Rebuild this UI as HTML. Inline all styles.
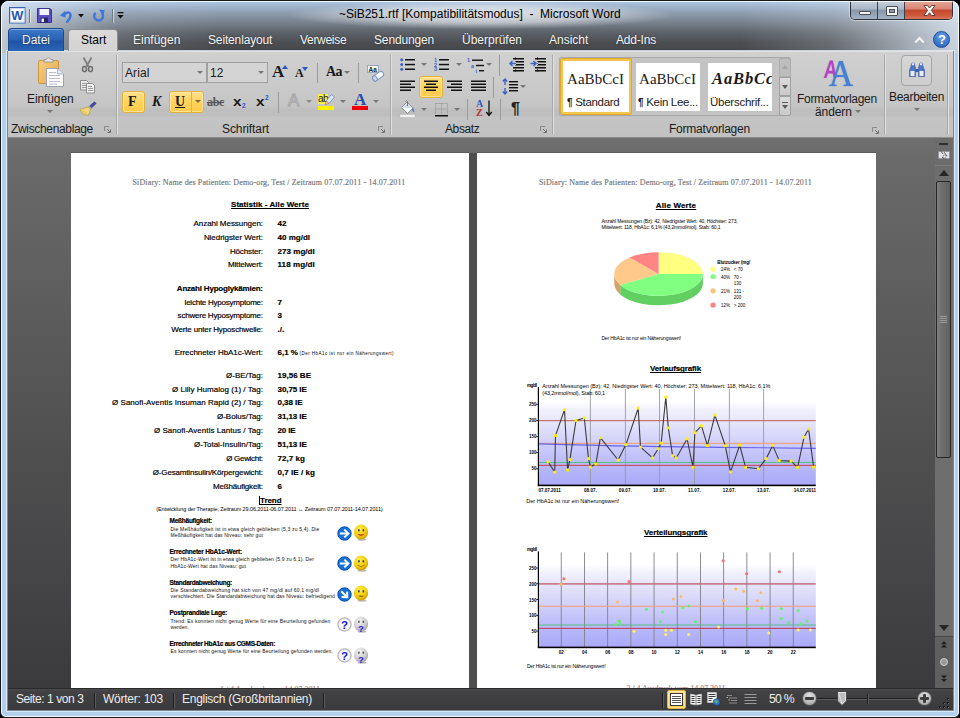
<!DOCTYPE html>
<html><head><meta charset="utf-8">
<style>
*{box-sizing:border-box;margin:0;padding:0}
html,body{width:960px;height:718px;overflow:hidden;background:#000}
body{position:relative;font-family:"Liberation Sans",sans-serif;font-size:12px;color:#000}
.a{position:absolute}
#frame{position:absolute;left:0;top:0;width:960px;height:718px;border-radius:9px 9px 6px 6px;background:#b4cfeb;border:1px solid #15181d;overflow:hidden}
#frame:after{content:'';position:absolute;left:0;top:0;width:958px;height:716px;border-radius:8px 8px 5px 5px;box-shadow:inset 0 0 0 1px rgba(255,255,255,.85);pointer-events:none}
#edge{position:absolute;left:6px;top:50px;width:947px;height:660px;border:1px solid #7b8794;border-top:none;box-shadow:0 0 0 1px rgba(225,238,250,.8)}
#glass{position:absolute;left:0;top:0;width:958px;height:52px;
 background:
 linear-gradient(to right,rgba(225,236,248,.78) 0,rgba(225,236,248,.5) 40px,rgba(225,236,248,.12) 120px,rgba(225,236,248,0) 220px,rgba(225,236,248,0) 740px,rgba(225,236,248,.2) 830px,rgba(225,236,248,.55) 900px,rgba(225,236,248,.85) 958px),
 linear-gradient(to bottom,#adc8e6 0px,#a0b6cf 5px,#8c9aab 13px,#747d88 23px,#5e636a 31px,#4d4f53 41px,#434446 52px);}
#client{position:absolute;left:7px;top:50px;width:944px;height:659px;background:#555}
.t{position:absolute;white-space:nowrap;line-height:14px;height:14px}
.w{color:#fff}
/* tabs */
.tab{position:absolute;top:32px;height:14px;line-height:14px;color:#f4f4f4;white-space:nowrap;text-shadow:0 0 2px rgba(0,0,0,.5)}

#ribbon{position:absolute;left:7px;top:50px;width:945px;height:87px;background:linear-gradient(to bottom,#d0d0d0 0,#cbcbcb 30px,#c5c5c5 54px,#bebebe 58px,#bebebe 64px,#c4c4c4 65px,#c1c1c1 87px);border-top:1px solid #e4e4e4;border-bottom:1px solid #8a8a8a}
#ribbon .t{color:#1a1a1a}
.gsep{position:absolute;top:4px;width:2px;height:80px;background:linear-gradient(to right,#a9a9a9 0,#a9a9a9 1px,#e0e0e0 1px,#e0e0e0 2px)}
.isep{position:absolute;width:1px;background:#9a9a9a}
.dd{position:absolute;width:0;height:0;border-left:3px solid transparent;border-right:3px solid transparent;border-top:3px solid #777}
.dl{position:absolute;width:7px;height:7px}
.ybtn{position:absolute;border:1px solid #e3b23c;border-radius:3px;background:linear-gradient(to bottom,#ffe08a 0,#ffd35e 50%,#ffcb4a 100%);box-shadow:inset 0 0 0 1px rgba(255,240,190,.6)}
.combo{position:absolute;height:21px;border:1px solid #a0a0a0;background:#d4d4d4}

#doc{position:absolute;left:7px;top:137px;width:945px;height:550px;background:linear-gradient(to bottom,#6f6f6f 0,#6a6a6a 20px,#4e4e4f 330px,#3b3a3d 552px);overflow:hidden}
.page{position:absolute;top:15px;height:540px;background:#fff;border-left:1px solid #fff;border-top:1px solid #fff;box-shadow:0 -1px 0 #5e5c58}
#status{position:absolute;left:7px;top:687px;width:945px;height:22px;background:linear-gradient(to bottom,#4a4a4c 0,#414143 3px,#3a3a3c 22px);border-top:1px solid #2a2a2a;color:#ececec}
#status .t{color:#ececec}
.ssep{position:absolute;top:4px;width:2px;height:15px;background:linear-gradient(to right,#1d1d1d 0,#1d1d1d 1px,#5a5a5a 1px,#5a5a5a 2px)}
#sb{position:absolute;left:927px;top:-1px;width:18px;height:552px;background:#6e6e6e}
.p1 .t,.p2 .t{font-family:"Liberation Sans",sans-serif;-webkit-text-stroke:.18px currentColor}
</style></head><body>
<div id="frame">
<div id="glass"></div>
<div id="edge"></div>
<!-- TITLEBAR -->
<div id="titlebar">
<div class="a" style="left:290px;top:0px;width:380px;height:28px;background:radial-gradient(ellipse at center,rgba(255,255,255,.72) 0,rgba(255,255,255,.5) 40%,rgba(255,255,255,.15) 62%,rgba(255,255,255,0) 72%)"></div>
<div class="t" style="left:338px;top:6px;">~SiB251.rtf [Kompatibilitätsmodus]&nbsp; -&nbsp; Microsoft Word</div>
</div>

<!-- QAT (frame coords = page-1) -->
<svg class="a" style="left:8px;top:6px" width="17" height="17" viewBox="0 0 17 17">
 <rect x="0.500" y="0.500" width="15.500" height="15.500" fill="#fdfdfd" stroke="#3a62b4"/>
 <rect x="1.500" y="1.500" width="13.500" height="13.500" fill="none" stroke="#c9d8f0" stroke-width="1"/>
 <text x="8.300" y="13.300" text-anchor="middle" font-family="Liberation Sans" font-weight="bold" font-size="13" fill="#1f55b8" textLength="12" lengthAdjust="spacingAndGlyphs">W</text>
</svg>
<div class="a" style="left:28px;top:8px;width:1px;height:14px;background:#6d7883;box-shadow:1px 0 0 rgba(255,255,255,.55)"></div>
<svg class="a" style="left:36px;top:7px" width="15" height="15" viewBox="0 0 15 15">
 <path d="M0.500 0.500H13L14.500 2V14.500H0.500Z" fill="#5b4fc4" stroke="#3a3290" stroke-width="1"/>
 <rect x="2.500" y="1" width="9.500" height="6" fill="#f3f3fa"/>
 <rect x="3.500" y="9.500" width="7.500" height="5" fill="#2a2660"/>
 <rect x="4.500" y="10.500" width="2.500" height="3.500" fill="#e8e8f4"/>
</svg>
<svg class="a" style="left:58px;top:7px" width="14" height="15" viewBox="0 0 14 15">
 <path d="M4.500 6.300Q11 2.500 11.600 7Q11.500 10.500 8 13.800" fill="none" stroke="#3d78d8" stroke-width="2.400" stroke-linecap="round"/>
 <path d="M0.800 7.800L6.300 2.800L6.800 9.600Z" fill="#3d78d8"/>
</svg>
<svg class="a" style="left:77px;top:13px" width="6" height="4"><path d="M0 0H6L3 3.500Z" fill="#111"/></svg>
<svg class="a" style="left:91px;top:7px" width="14" height="15" viewBox="0 0 14 15">
 <path d="M3.600 4.800A4.400 4.400 0 1 0 10 5.200" fill="none" stroke="#3d78d8" stroke-width="2.500"/>
 <path d="M7 1.600L12.800 2.200L11 8Z" fill="#3d78d8"/>
</svg>
<div class="a" style="left:111px;top:8px;width:1px;height:14px;background:#6d7883;box-shadow:1px 0 0 rgba(255,255,255,.55)"></div>
<svg class="a" style="left:116px;top:11px" width="7" height="7" viewBox="0 0 7 7"><path d="M0.500 0.700H6.500" stroke="#111" stroke-width="1.200"/><path d="M0.300 3H6.700L3.500 6.500Z" fill="#111"/></svg>
<!-- window buttons -->
<div class="a" style="left:849px;top:0px;width:103px;height:19px;border:1px solid #2c3038;border-top:none;border-radius:0 0 5px 5px;box-shadow:0 0 0 1px rgba(255,255,255,.45);overflow:hidden">
 <div class="a" style="left:0;top:0;width:27px;height:18px;background:linear-gradient(#c5d1de 0,#a9b6c5 45%,#8796a8 50%,#a3b3c6 100%);border-right:1px solid #3a4048"></div>
 <div class="a" style="left:27px;top:0;width:27px;height:18px;background:linear-gradient(#c5d1de 0,#a9b6c5 45%,#8796a8 50%,#a3b3c6 100%);border-right:1px solid #3a4048"></div>
 <div class="a" style="left:54px;top:0;width:47px;height:18px;background:linear-gradient(#e6a898 0,#d98572 45%,#c4452c 50%,#cf5a3c 80%,#d8785c 100%)"></div>
</div>
<div class="a" style="left:858px;top:10px;width:12px;height:4px;background:#f2f2f2;border:1px solid #4a4e55;border-radius:1px"></div>
<div class="a" style="left:885px;top:5px;width:12px;height:10px;border:1px solid #4a4e55;border-radius:1px;background:#f2f2f2"></div>
<div class="a" style="left:888px;top:8px;width:6px;height:4px;border:1px solid #4a4e55;background:#8f9dae"></div>
<svg class="a" style="left:921px;top:3px" width="15" height="13" viewBox="0 0 15 13"><path d="M2 1.500H5.500L7.500 4L9.500 1.500H13L9.400 6.300L13 11.500H9.500L7.500 8.700L5.500 11.500H2L5.600 6.300Z" fill="#f6f6f6" stroke="#5a3430" stroke-width=".9"/></svg>
<!-- ribbon minimize + help -->
<svg class="a" style="left:913px;top:35px" width="11" height="8" viewBox="0 0 11 8"><path d="M1.300 6.500L5.500 2L9.700 6.500" fill="none" stroke="#f4f4f4" stroke-width="2"/></svg>
<div class="a" style="left:932px;top:30px;width:17px;height:17px;border-radius:50%;background:radial-gradient(circle at 50% 30%,#6ea2e6 0,#3c78d0 55%,#2a5eb4 100%);border:1px solid #244f9c"></div>
<div class="t" style="left:937px;top:31px;font:bold 13px/15px 'Liberation Sans',sans-serif;height:15px;color:#fff">?</div>
<!-- TABS -->
<div id="tabs">
<div class="a" style="left:7px;top:27px;width:56px;height:24px;border-radius:4px 4px 0 0;background:linear-gradient(to bottom,#3c78c8 0,#2a62b4 45%,#1f54a4 55%,#2b68bb 100%);border:1px solid #1b4a90;border-bottom:none;box-shadow:inset 0 1px 0 rgba(255,255,255,.35)"></div>
<div class="tab" style="left:21px;">Datei</div>
<div class="a" style="left:67px;top:28px;width:50px;height:24px;border-radius:4px 4px 0 0;background:linear-gradient(to bottom,#dcd9d9,#d2d2d2);border:1px solid #8c8c8c;border-bottom:none"></div>
<div class="tab" style="left:80px;color:#000;text-shadow:none">Start</div>
<div class="tab" style="left:132px;">Einfügen</div>
<div class="tab" style="left:207px;letter-spacing:-.15px">Seitenlayout</div>
<div class="tab" style="left:299px;letter-spacing:-.3px">Verweise</div>
<div class="tab" style="left:373px;letter-spacing:-.15px">Sendungen</div>
<div class="tab" style="left:461px;">Überprüfen</div>
<div class="tab" style="left:548px;">Ansicht</div>
<div class="tab" style="left:615px;letter-spacing:-.2px">Add-Ins</div>
</div>

<!-- DOCUMENT AREA : inner coords = page coords - (8,137) -->
<div id="doc">
<div class="a" style="left:461px;top:15px;width:9px;height:540px;background:#4e4e4e"></div>
<div class="page p1" style="left:63px;width:398px"><!--P1-->
<div class="t" style="font:8px 'Liberation Serif';line-height:10px;height:10px;top:23.6px;letter-spacing:0.137px;left:60.5px;color:#7a7a7a">SiDiary: Name des Patienten: Demo-org, Test / Zeitraum 07.07.2011 - 14.07.2011</div>
<div class="t" style="font:bold 8px 'Liberation Sans';line-height:10px;height:10px;top:46.1px;letter-spacing:0.049px;left:159.0px;text-decoration:underline">Statistik - Alle Werte</div>
<div class="t" style="font:8px 'Liberation Sans';line-height:10px;height:10px;top:64.6px;letter-spacing:-0.045px;right:206.0px;">Anzahl Messungen:</div>
<div class="t" style="font:bold 8px 'Liberation Sans';line-height:10px;height:10px;top:64.6px;left:205.5px;">42</div>
<div class="t" style="font:8px 'Liberation Sans';line-height:10px;height:10px;top:78.6px;letter-spacing:-0.051px;right:206.1px;">Niedrigster Wert:</div>
<div class="t" style="font:bold 8px 'Liberation Sans';line-height:10px;height:10px;top:78.6px;letter-spacing:0.006px;left:205.5px;">40 mg/dl</div>
<div class="t" style="font:8px 'Liberation Sans';line-height:10px;height:10px;top:92.6px;letter-spacing:-0.137px;right:206.1px;">Höchster:</div>
<div class="t" style="font:bold 8px 'Liberation Sans';line-height:10px;height:10px;top:92.6px;letter-spacing:0.044px;left:205.5px;">273 mg/dl</div>
<div class="t" style="font:8px 'Liberation Sans';line-height:10px;height:10px;top:106.4px;letter-spacing:-0.132px;right:206.1px;">Mittelwert:</div>
<div class="t" style="font:bold 8px 'Liberation Sans';line-height:10px;height:10px;top:106.4px;letter-spacing:0.092px;left:205.5px;">118 mg/dl</div>
<div class="t" style="font:8px 'Liberation Sans';line-height:10px;height:10px;top:143.5px;letter-spacing:-0.236px;right:206.2px;">leichte Hyposymptome:</div>
<div class="t" style="font:bold 8px 'Liberation Sans';line-height:10px;height:10px;top:143.5px;left:205.5px;">7</div>
<div class="t" style="font:8px 'Liberation Sans';line-height:10px;height:10px;top:156.6px;letter-spacing:-0.220px;right:206.2px;">schwere Hyposymptome:</div>
<div class="t" style="font:bold 8px 'Liberation Sans';line-height:10px;height:10px;top:156.6px;left:205.5px;">3</div>
<div class="t" style="font:8px 'Liberation Sans';line-height:10px;height:10px;top:170.8px;letter-spacing:-0.154px;right:206.2px;">Werte unter Hyposchwelle:</div>
<div class="t" style="font:bold 8px 'Liberation Sans';line-height:10px;height:10px;top:170.8px;left:205.5px;">./.</div>
<div class="t" style="font:8px 'Liberation Sans';line-height:10px;height:10px;top:193.8px;letter-spacing:-0.060px;right:206.1px;">Errechneter HbA1c-Wert:</div>
<div class="t" style="font:bold 8px 'Liberation Sans';line-height:10px;height:10px;top:193.8px;left:205.5px;">6,1 %</div>
<div class="t" style="font:8px 'Liberation Sans';line-height:10px;height:10px;top:216.8px;letter-spacing:0.010px;right:206.0px;">Ø-BE/Tag:</div>
<div class="t" style="font:bold 8px 'Liberation Sans';line-height:10px;height:10px;top:216.8px;letter-spacing:0.018px;left:205.5px;">19,56 BE</div>
<div class="t" style="font:8px 'Liberation Sans';line-height:10px;height:10px;top:230.6px;letter-spacing:0.034px;right:206.0px;">Ø Lilly Humalog (1) / Tag:</div>
<div class="t" style="font:bold 8px 'Liberation Sans';line-height:10px;height:10px;top:230.6px;letter-spacing:-0.064px;left:205.5px;">30,75 IE</div>
<div class="t" style="font:8px 'Liberation Sans';line-height:10px;height:10px;top:244.4px;letter-spacing:0.035px;right:206.0px;">Ø Sanofi-Aventis Insuman Rapid (2) / Tag:</div>
<div class="t" style="font:bold 8px 'Liberation Sans';line-height:10px;height:10px;top:244.4px;letter-spacing:-0.051px;left:205.5px;">0,38 IE</div>
<div class="t" style="font:8px 'Liberation Sans';line-height:10px;height:10px;top:258.1px;letter-spacing:-0.021px;right:206.0px;">Ø-Bolus/Tag:</div>
<div class="t" style="font:bold 8px 'Liberation Sans';line-height:10px;height:10px;top:258.1px;letter-spacing:-0.064px;left:205.5px;">31,13 IE</div>
<div class="t" style="font:8px 'Liberation Sans';line-height:10px;height:10px;top:271.9px;letter-spacing:0.044px;right:206.0px;">Ø Sanofi-Aventis Lantus / Tag:</div>
<div class="t" style="font:bold 8px 'Liberation Sans';line-height:10px;height:10px;top:271.9px;letter-spacing:-0.138px;left:205.5px;">20 IE</div>
<div class="t" style="font:8px 'Liberation Sans';line-height:10px;height:10px;top:285.6px;right:206.0px;">Ø-Total-Insulin/Tag:</div>
<div class="t" style="font:bold 8px 'Liberation Sans';line-height:10px;height:10px;top:285.6px;letter-spacing:-0.064px;left:205.5px;">51,13 IE</div>
<div class="t" style="font:8px 'Liberation Sans';line-height:10px;height:10px;top:299.6px;letter-spacing:-0.318px;right:206.3px;">Ø Gewicht:</div>
<div class="t" style="font:bold 8px 'Liberation Sans';line-height:10px;height:10px;top:299.6px;letter-spacing:0.023px;left:205.5px;">72,7 kg</div>
<div class="t" style="font:8px 'Liberation Sans';line-height:10px;height:10px;top:313.8px;letter-spacing:-0.172px;right:206.2px;">Ø-Gesamtinsulin/Körpergewicht:</div>
<div class="t" style="font:bold 8px 'Liberation Sans';line-height:10px;height:10px;top:313.8px;letter-spacing:0.036px;left:205.5px;">0,7 IE / kg</div>
<div class="t" style="font:8px 'Liberation Sans';line-height:10px;height:10px;top:327.6px;letter-spacing:-0.198px;right:206.2px;">Meßhäufigkeit:</div>
<div class="t" style="font:bold 8px 'Liberation Sans';line-height:10px;height:10px;top:327.6px;left:205.5px;">6</div>
<div class="t" style="font:bold 8px 'Liberation Sans';line-height:10px;height:10px;top:129.6px;letter-spacing:-0.202px;right:206.2px;">Anzahl Hypoglykämien:</div>
<div class="t" style="font:4.5px 'Liberation Sans';line-height:6px;height:6px;top:197.1px;letter-spacing:0.459px;left:227.5px;-webkit-text-stroke:0;">(Der HbA1c ist nur ein Näherungswert)</div>
<div class="t" style="font:bold 8px 'Liberation Sans';line-height:10px;height:10px;top:341.6px;letter-spacing:-0.056px;left:188.0px;text-decoration:underline">Trend</div>
<div class="t" style="font:5.5px 'Liberation Sans';line-height:7px;height:7px;top:351.6px;letter-spacing:-0.105px;left:84.3px;-webkit-text-stroke:0;">(Entwicklung der Therapie, Zeitraum 29.06.2011-06.07.2011 ↔ Zeitraum 07.07.2011-14.07.2011)</div>
<div class="t" style="font:bold 6.5px 'Liberation Sans';line-height:8px;height:8px;top:363.4px;letter-spacing:-0.241px;left:97.5px;">Meßhäufigkeit:</div>
<div class="t" style="font:5px 'Liberation Sans';line-height:6px;height:6px;top:371.7px;letter-spacing:0.166px;left:98.5px;-webkit-text-stroke:0;color:#111">Die Meßhäufigkeit ist in etwa gleich geblieben (5,3 zu 5,4). Die</div>
<div class="t" style="font:5px 'Liberation Sans';line-height:6px;height:6px;top:378.2px;letter-spacing:0.145px;left:98.5px;-webkit-text-stroke:0;color:#111">Meßhäufigkeit hat das Niveau: sehr gut</div>
<div class="t" style="font:bold 6.5px 'Liberation Sans';line-height:8px;height:8px;top:394.0px;letter-spacing:-0.219px;left:97.5px;">Errechneter HbA1c-Wert:</div>
<div class="t" style="font:5px 'Liberation Sans';line-height:6px;height:6px;top:402.3px;letter-spacing:0.135px;left:98.5px;-webkit-text-stroke:0;color:#111">Der HbA1c-Wert ist in etwa gleich geblieben (5,9 zu 6,1). Der</div>
<div class="t" style="font:5px 'Liberation Sans';line-height:6px;height:6px;top:408.8px;letter-spacing:0.130px;left:98.5px;-webkit-text-stroke:0;color:#111">HbA1c-Wert hat das Niveau: gut</div>
<div class="t" style="font:bold 6.5px 'Liberation Sans';line-height:8px;height:8px;top:424.6px;letter-spacing:-0.285px;left:97.5px;">Standardabweichung:</div>
<div class="t" style="font:5px 'Liberation Sans';line-height:6px;height:6px;top:432.9px;letter-spacing:0.185px;left:98.5px;-webkit-text-stroke:0;color:#111">Die Standardabweichung hat sich von 47 mg/dl auf 60,1 mg/dl</div>
<div class="t" style="font:5px 'Liberation Sans';line-height:6px;height:6px;top:439.4px;letter-spacing:0.144px;left:98.5px;-webkit-text-stroke:0;color:#111">verschlechtert. Die Standardabweichung hat das Niveau: befriedigend</div>
<div class="t" style="font:bold 6.5px 'Liberation Sans';line-height:8px;height:8px;top:455.2px;letter-spacing:-0.243px;left:97.5px;">Postprandiale Lage:</div>
<div class="t" style="font:5px 'Liberation Sans';line-height:6px;height:6px;top:463.5px;letter-spacing:0.161px;left:98.5px;-webkit-text-stroke:0;color:#111">Trend: Es konnten nicht genug Werte für eine Beurteilung gefunden</div>
<div class="t" style="font:5px 'Liberation Sans';line-height:6px;height:6px;top:470.0px;letter-spacing:0.100px;left:98.5px;-webkit-text-stroke:0;color:#111">werden.</div>
<div class="t" style="font:bold 6.5px 'Liberation Sans';line-height:8px;height:8px;top:485.6px;letter-spacing:-0.306px;left:97.5px;">Errechneter HbA1c aus CGMS-Daten:</div>
<div class="t" style="font:5px 'Liberation Sans';line-height:6px;height:6px;top:493.9px;letter-spacing:0.143px;left:98.5px;-webkit-text-stroke:0;color:#111">Es konnten nicht genug Werte für eine Beurteilung gefunden werden.</div>
<div class="t" style="font:8px 'Liberation Serif';line-height:10px;height:10px;top:530.6px;letter-spacing:-0.028px;left:148.0px;color:#b08a8a">1 / 4 Ausdruck vom 14.07.2011</div>
<svg class="a" style="left:265.4px;top:371.9px" width="15" height="15" viewBox="0 0 15 15"><circle cx="7.500" cy="7.500" r="6.700" fill="#1670dc" stroke="#0b4aa4" stroke-width="1"/><path d="M2.800 7.500H11M7.300 3.600L11.400 7.500L7.300 11.400" transform="rotate(0 7.500 7.500)" fill="none" stroke="#fff" stroke-width="2"/></svg>
<svg class="a" style="left:281.1px;top:370.2px" width="16" height="18" viewBox="0 0 16 18"><defs><radialGradient id="sm" cx=".4" cy=".3" r=".75"><stop offset="0" stop-color="#fff04a"/><stop offset=".6" stop-color="#f2cc0c"/><stop offset="1" stop-color="#c99600"/></radialGradient></defs><ellipse cx="9" cy="15.600" rx="4.500" ry="1.200" fill="#8a8a8a" opacity=".6"/><ellipse cx="8" cy="8" rx="7.100" ry="7.600" fill="url(#sm)"/><ellipse cx="5.900" cy="6.300" rx=".8" ry="1.400" fill="#3a3a6a"/><ellipse cx="10.300" cy="6.300" rx=".8" ry="1.400" fill="#3a3a6a"/><path d="M4.300 9.600Q8 14.500 11.700 9.600Q8 11.600 4.300 9.600Z" fill="#c8242c"/></svg>
<svg class="a" style="left:265.4px;top:402.1px" width="15" height="15" viewBox="0 0 15 15"><circle cx="7.500" cy="7.500" r="6.700" fill="#1670dc" stroke="#0b4aa4" stroke-width="1"/><path d="M2.800 7.500H11M7.300 3.600L11.400 7.500L7.300 11.400" transform="rotate(0 7.500 7.500)" fill="none" stroke="#fff" stroke-width="2"/></svg>
<svg class="a" style="left:281.1px;top:400.6px" width="16" height="18" viewBox="0 0 16 18"><defs><radialGradient id="sm" cx=".4" cy=".3" r=".75"><stop offset="0" stop-color="#fff04a"/><stop offset=".6" stop-color="#f2cc0c"/><stop offset="1" stop-color="#c99600"/></radialGradient></defs><ellipse cx="9" cy="15.600" rx="4.500" ry="1.200" fill="#8a8a8a" opacity=".6"/><ellipse cx="8" cy="8" rx="7.100" ry="7.600" fill="url(#sm)"/><ellipse cx="5.900" cy="6.300" rx=".8" ry="1.400" fill="#3a3a6a"/><ellipse cx="10.300" cy="6.300" rx=".8" ry="1.400" fill="#3a3a6a"/><path d="M4.500 10.200Q8 13.200 11.500 10.200" fill="none" stroke="#b07a10" stroke-width="1"/></svg>
<svg class="a" style="left:265.4px;top:432.7px" width="15" height="15" viewBox="0 0 15 15"><circle cx="7.500" cy="7.500" r="6.700" fill="#1670dc" stroke="#0b4aa4" stroke-width="1"/><path d="M2.800 7.500H11M7.300 3.600L11.400 7.500L7.300 11.400" transform="rotate(45 7.500 7.500)" fill="none" stroke="#fff" stroke-width="2"/></svg>
<svg class="a" style="left:281.3px;top:431.4px" width="16" height="18" viewBox="0 0 16 18"><defs><radialGradient id="sm" cx=".4" cy=".3" r=".75"><stop offset="0" stop-color="#fff04a"/><stop offset=".6" stop-color="#f2cc0c"/><stop offset="1" stop-color="#c99600"/></radialGradient></defs><ellipse cx="9" cy="15.600" rx="4.500" ry="1.200" fill="#8a8a8a" opacity=".6"/><ellipse cx="8" cy="8" rx="7.100" ry="7.600" fill="url(#sm)"/><ellipse cx="5.900" cy="6.300" rx=".8" ry="1.400" fill="#3a3a6a"/><ellipse cx="10.300" cy="6.300" rx=".8" ry="1.400" fill="#3a3a6a"/><path d="M5.800 11.200H10.200" fill="none" stroke="#9a6a10" stroke-width="1.300"/></svg>
<svg class="a" style="left:265.4px;top:463.1px" width="15" height="15" viewBox="0 0 15 15"><circle cx="7.500" cy="7.500" r="6.600" fill="#ececec" stroke="#b4b4b4" stroke-width="1.200"/><circle cx="7.500" cy="7.500" r="5.200" fill="#f8f8f8"/><text x="7.500" y="11.700" text-anchor="middle" font-family="Liberation Sans" font-weight="bold" font-size="11.500" fill="#1a1ae0">?</text></svg>
<svg class="a" style="left:281.3px;top:461.6px" width="16" height="18" viewBox="0 0 16 18"><defs><radialGradient id="gh" cx=".4" cy=".3" r=".75"><stop offset="0" stop-color="#f4f4f4"/><stop offset=".6" stop-color="#cfcfcf"/><stop offset="1" stop-color="#9c9c9c"/></radialGradient></defs><ellipse cx="9" cy="15.600" rx="4.500" ry="1.200" fill="#8a8a8a" opacity=".6"/><ellipse cx="8" cy="8" rx="7.100" ry="7.600" fill="url(#gh)"/><ellipse cx="5.900" cy="5.800" rx=".8" ry="1.300" fill="#555"/><ellipse cx="10.300" cy="5.800" rx=".8" ry="1.300" fill="#555"/><text x="8" y="15.500" text-anchor="middle" font-family="Liberation Sans" font-weight="bold" font-size="9.500" fill="#1a1ae0">?</text></svg>
<svg class="a" style="left:265.4px;top:494.1px" width="15" height="15" viewBox="0 0 15 15"><circle cx="7.500" cy="7.500" r="6.600" fill="#ececec" stroke="#b4b4b4" stroke-width="1.200"/><circle cx="7.500" cy="7.500" r="5.200" fill="#f8f8f8"/><text x="7.500" y="11.700" text-anchor="middle" font-family="Liberation Sans" font-weight="bold" font-size="11.500" fill="#1a1ae0">?</text></svg>
<svg class="a" style="left:281.3px;top:492.6px" width="16" height="18" viewBox="0 0 16 18"><defs><radialGradient id="gh" cx=".4" cy=".3" r=".75"><stop offset="0" stop-color="#f4f4f4"/><stop offset=".6" stop-color="#cfcfcf"/><stop offset="1" stop-color="#9c9c9c"/></radialGradient></defs><ellipse cx="9" cy="15.600" rx="4.500" ry="1.200" fill="#8a8a8a" opacity=".6"/><ellipse cx="8" cy="8" rx="7.100" ry="7.600" fill="url(#gh)"/><ellipse cx="5.900" cy="5.800" rx=".8" ry="1.300" fill="#555"/><ellipse cx="10.300" cy="5.800" rx=".8" ry="1.300" fill="#555"/><text x="8" y="15.500" text-anchor="middle" font-family="Liberation Sans" font-weight="bold" font-size="9.500" fill="#1a1ae0">?</text></svg>
<div class="a" style="left:187px;top:341.5px;width:1px;height:9px;background:#000"></div>
<!--/P1--></div>
<div class="page p2" style="left:469px;width:399px"><!--P2-->
<svg class="a" style="left:0;top:0" width="397" height="534" viewBox="0 0 397 534">
<path d="M224.9 120.0 A44.3 21.8 0 0 1 142.2 130.9 L142.2 140.4 A44.3 21.8 0 0 0 224.9 129.5 Z" fill="#62cf62"/>
<path d="M142.2 130.9 A44.3 21.8 0 0 1 136.3 120.0 L136.3 129.5 A44.3 21.8 0 0 0 142.2 140.4 Z" fill="#d9a066"/>
<path d="M180.6 120.0 L180.6 98.2 A44.3 21.8 0 0 1 224.9 120.0 Z" fill="#ffff80"/>
<path d="M180.6 120.0 L224.9 120.0 A44.3 21.8 0 0 1 142.2 130.9 Z" fill="#80ff80"/>
<path d="M180.6 120.0 L142.2 130.9 A44.3 21.8 0 0 1 151.5 103.5 Z" fill="#ffc98a"/>
<path d="M180.6 120.0 L151.5 103.5 A44.3 21.8 0 0 1 180.6 98.2 Z" fill="#ff8484"/>
<circle cx="235.0" cy="115.2" r="2.600" fill="#ffff80"/>
<circle cx="235.0" cy="122.5" r="2.600" fill="#80ff80"/>
<circle cx="235.0" cy="136.8" r="2.600" fill="#ffc080"/>
<circle cx="235.0" cy="151.0" r="2.600" fill="#ff8080"/>
<defs>
<linearGradient id="g1" x1="0" y1="0" x2="0" y2="1"><stop offset="0" stop-color="#ffffff"/><stop offset=".13" stop-color="#ffffff"/><stop offset=".22" stop-color="#f0f0fd"/><stop offset=".34" stop-color="#e6e6fa"/><stop offset=".55" stop-color="#d1d1fa"/><stop offset=".8" stop-color="#b8b8fa"/><stop offset="1" stop-color="#a9a9f8"/></linearGradient>
</defs>
<rect x="60.8" y="235.0" width="277.0" height="95.9" fill="url(#g1)"/>
<rect x="111.9" y="235.0" width=".9" height="95.9" fill="#9a9aa2"/>
<rect x="146.9" y="235.0" width=".9" height="95.9" fill="#9a9aa2"/>
<rect x="181.0" y="235.0" width=".9" height="95.9" fill="#9a9aa2"/>
<rect x="216.1" y="235.0" width=".9" height="95.9" fill="#9a9aa2"/>
<rect x="250.9" y="235.0" width=".9" height="95.9" fill="#9a9aa2"/>
<rect x="285.2" y="235.0" width=".9" height="95.9" fill="#9a9aa2"/>
<rect x="60.8" y="266.1" width="277.0" height="1.1" fill="#c86468"/>
<rect x="60.8" y="288.8" width="277.0" height="1.1" fill="#f2a070"/>
<rect x="60.8" y="308.0" width="277.0" height="1.0" fill="#52c482"/>
<rect x="60.8" y="310.8" width="277.0" height="1.1" fill="#d04858"/>
<path d="M60.8 289.8 C122 291.5 172 292.8 242 293.3 L337.8 294.3" fill="none" stroke="#6464f0" stroke-width="1.200"/>
<polyline points="70.2,307.9 76.7,318.1 77.5,281.6 86.5,255.7 89.6,316.0 91.9,305.6 98.0,266.6 106.3,264.0 110.5,304.6 112.4,313.1 117.8,310.0 122.4,283.7 140.1,306.0 147.9,290.6 160.2,254.2 162.5,293.1 174.6,303.9 180.2,294.7 183.2,289.1 187.8,243.0 190.3,273.9 194.6,301.6 198.2,303.9 209.1,284.9 215.0,313.3 216.9,278.7 223.5,271.8 229.4,291.6 236.9,261.1 247.3,291.8 252.5,317.9 261.7,291.2 267.6,313.3 280.3,314.8 288.2,304.6 294.7,291.4 301.2,306.6 313.1,307.1 319.6,313.3 326.0,283.3 330.6,275.1 335.6,313.1" fill="none" stroke="#3c3c40" stroke-width="1.100" stroke-linejoin="round"/>
<rect x="68.8" y="306.5" width="2.800" height="2.800" fill="#fff200"/>
<rect x="75.3" y="316.7" width="2.800" height="2.800" fill="#fff200"/>
<rect x="76.1" y="280.2" width="2.800" height="2.800" fill="#fff200"/>
<rect x="85.1" y="254.3" width="2.800" height="2.800" fill="#fff200"/>
<rect x="88.2" y="314.6" width="2.800" height="2.800" fill="#fff200"/>
<rect x="90.5" y="304.2" width="2.800" height="2.800" fill="#fff200"/>
<rect x="96.6" y="265.2" width="2.800" height="2.800" fill="#fff200"/>
<rect x="104.9" y="262.6" width="2.800" height="2.800" fill="#fff200"/>
<rect x="109.1" y="303.2" width="2.800" height="2.800" fill="#fff200"/>
<rect x="111.0" y="311.7" width="2.800" height="2.800" fill="#fff200"/>
<rect x="116.4" y="308.6" width="2.800" height="2.800" fill="#fff200"/>
<rect x="121.0" y="282.3" width="2.800" height="2.800" fill="#fff200"/>
<rect x="138.7" y="304.6" width="2.800" height="2.800" fill="#fff200"/>
<rect x="146.5" y="289.2" width="2.800" height="2.800" fill="#fff200"/>
<rect x="158.8" y="252.8" width="2.800" height="2.800" fill="#fff200"/>
<rect x="161.1" y="291.7" width="2.800" height="2.800" fill="#fff200"/>
<rect x="173.2" y="302.5" width="2.800" height="2.800" fill="#fff200"/>
<rect x="178.8" y="293.3" width="2.800" height="2.800" fill="#fff200"/>
<rect x="181.8" y="287.7" width="2.800" height="2.800" fill="#fff200"/>
<rect x="186.4" y="241.6" width="2.800" height="2.800" fill="#fff200"/>
<rect x="188.9" y="272.5" width="2.800" height="2.800" fill="#fff200"/>
<rect x="193.2" y="300.2" width="2.800" height="2.800" fill="#fff200"/>
<rect x="196.8" y="302.5" width="2.800" height="2.800" fill="#fff200"/>
<rect x="207.7" y="283.5" width="2.800" height="2.800" fill="#fff200"/>
<rect x="213.6" y="311.9" width="2.800" height="2.800" fill="#fff200"/>
<rect x="215.5" y="277.3" width="2.800" height="2.800" fill="#fff200"/>
<rect x="222.1" y="270.4" width="2.800" height="2.800" fill="#fff200"/>
<rect x="228.0" y="290.2" width="2.800" height="2.800" fill="#fff200"/>
<rect x="235.5" y="259.7" width="2.800" height="2.800" fill="#fff200"/>
<rect x="245.9" y="290.4" width="2.800" height="2.800" fill="#fff200"/>
<rect x="251.1" y="316.5" width="2.800" height="2.800" fill="#fff200"/>
<rect x="260.3" y="289.8" width="2.800" height="2.800" fill="#fff200"/>
<rect x="266.2" y="311.9" width="2.800" height="2.800" fill="#fff200"/>
<rect x="278.9" y="313.4" width="2.800" height="2.800" fill="#fff200"/>
<rect x="286.8" y="303.2" width="2.800" height="2.800" fill="#fff200"/>
<rect x="293.3" y="290.0" width="2.800" height="2.800" fill="#fff200"/>
<rect x="299.8" y="305.2" width="2.800" height="2.800" fill="#fff200"/>
<rect x="311.7" y="305.7" width="2.800" height="2.800" fill="#fff200"/>
<rect x="318.2" y="311.9" width="2.800" height="2.800" fill="#fff200"/>
<rect x="324.6" y="281.9" width="2.800" height="2.800" fill="#fff200"/>
<rect x="329.2" y="273.7" width="2.800" height="2.800" fill="#fff200"/>
<rect x="334.2" y="311.7" width="2.800" height="2.800" fill="#fff200"/>
<rect x="59.8" y="233.0" width="1.200" height="98.9" fill="#000"/>
<rect x="59.8" y="330.6" width="278.0" height="1.600" fill="#000"/>
<rect x="58.3" y="314.4" width="2" height=".8" fill="#000"/>
<rect x="58.3" y="298.2" width="2" height=".8" fill="#000"/>
<rect x="58.3" y="282.1" width="2" height=".8" fill="#000"/>
<rect x="58.3" y="266.0" width="2" height=".8" fill="#000"/>
<rect x="58.3" y="249.9" width="2" height=".8" fill="#000"/>
<rect x="60.8" y="398.4" width="277.0" height="94.5" fill="url(#g1)"/>
<rect x="82.8" y="398.4" width=".9" height="94.5" fill="#80808a"/>
<rect x="106.0" y="398.4" width=".9" height="94.5" fill="#80808a"/>
<rect x="129.2" y="398.4" width=".9" height="94.5" fill="#80808a"/>
<rect x="152.4" y="398.4" width=".9" height="94.5" fill="#80808a"/>
<rect x="175.6" y="398.4" width=".9" height="94.5" fill="#80808a"/>
<rect x="198.8" y="398.4" width=".9" height="94.5" fill="#80808a"/>
<rect x="222.0" y="398.4" width=".9" height="94.5" fill="#80808a"/>
<rect x="245.2" y="398.4" width=".9" height="94.5" fill="#80808a"/>
<rect x="268.4" y="398.4" width=".9" height="94.5" fill="#80808a"/>
<rect x="291.6" y="398.4" width=".9" height="94.5" fill="#80808a"/>
<rect x="314.8" y="398.4" width=".9" height="94.5" fill="#80808a"/>
<rect x="60.8" y="429.2" width="277.0" height="1.4" fill="#c46474"/>
<rect x="60.8" y="451.7" width="277.0" height="1.1" fill="#f2a478"/>
<rect x="60.8" y="470.5" width="277.0" height="1.0" fill="#52c482"/>
<rect x="60.8" y="473.8" width="277.0" height="1.2" fill="#c44a6a"/>
<circle cx="85.9" cy="424.7" r="1.500" fill="#ff6a6a"/>
<circle cx="151.0" cy="427.4" r="1.500" fill="#ff6a6a"/>
<circle cx="245.2" cy="406.7" r="1.500" fill="#ff6a6a"/>
<circle cx="268.6" cy="419.7" r="1.500" fill="#ff6a6a"/>
<circle cx="301.4" cy="417.8" r="1.500" fill="#ff6a6a"/>
<circle cx="82.9" cy="430.3" r="1.500" fill="#ffb866"/>
<circle cx="139.5" cy="448.0" r="1.500" fill="#ffb866"/>
<circle cx="195.3" cy="445.0" r="1.500" fill="#ffb866"/>
<circle cx="203.0" cy="442.4" r="1.500" fill="#ffb866"/>
<circle cx="257.8" cy="435.1" r="1.500" fill="#ffb866"/>
<circle cx="265.5" cy="437.2" r="1.500" fill="#ffb866"/>
<circle cx="282.8" cy="438.7" r="1.500" fill="#ffb866"/>
<circle cx="279.3" cy="446.8" r="1.500" fill="#ffb866"/>
<circle cx="245.2" cy="446.6" r="1.500" fill="#ffb866"/>
<circle cx="168.5" cy="455.2" r="1.500" fill="#66f266"/>
<circle cx="184.6" cy="458.0" r="1.500" fill="#66f266"/>
<circle cx="204.9" cy="453.7" r="1.500" fill="#66f266"/>
<circle cx="210.7" cy="452.0" r="1.500" fill="#66f266"/>
<circle cx="182.5" cy="467.7" r="1.500" fill="#66f266"/>
<circle cx="141.4" cy="467.0" r="1.500" fill="#66f266"/>
<circle cx="142.2" cy="469.6" r="1.500" fill="#66f266"/>
<circle cx="137.6" cy="470.6" r="1.500" fill="#66f266"/>
<circle cx="217.4" cy="467.7" r="1.500" fill="#66f266"/>
<circle cx="269.4" cy="454.7" r="1.500" fill="#66f266"/>
<circle cx="283.6" cy="454.3" r="1.500" fill="#66f266"/>
<circle cx="303.3" cy="454.7" r="1.500" fill="#66f266"/>
<circle cx="320.2" cy="456.4" r="1.500" fill="#66f266"/>
<circle cx="303.3" cy="464.6" r="1.500" fill="#66f266"/>
<circle cx="310.6" cy="468.5" r="1.500" fill="#66f266"/>
<circle cx="323.1" cy="469.8" r="1.500" fill="#66f266"/>
<circle cx="329.0" cy="467.0" r="1.500" fill="#66f266"/>
<circle cx="156.0" cy="477.3" r="1.500" fill="#fff25a"/>
<circle cx="187.8" cy="476.3" r="1.500" fill="#fff25a"/>
<circle cx="193.4" cy="476.3" r="1.500" fill="#fff25a"/>
<circle cx="187.8" cy="480.6" r="1.500" fill="#fff25a"/>
<circle cx="210.7" cy="480.4" r="1.500" fill="#fff25a"/>
<circle cx="240.6" cy="473.1" r="1.500" fill="#fff25a"/>
<circle cx="290.7" cy="479.0" r="1.500" fill="#fff25a"/>
<circle cx="320.2" cy="476.0" r="1.500" fill="#fff25a"/>
<circle cx="332.5" cy="476.0" r="1.500" fill="#fff25a"/>
<rect x="59.8" y="397.4" width="1.200" height="96.5" fill="#000"/>
<rect x="59.8" y="492.6" width="278.0" height="1.600" fill="#000"/>
<rect x="58.3" y="476.7" width="2" height=".8" fill="#000"/>
<rect x="58.3" y="460.9" width="2" height=".8" fill="#000"/>
<rect x="58.3" y="445.2" width="2" height=".8" fill="#000"/>
<rect x="58.3" y="429.4" width="2" height=".8" fill="#000"/>
<rect x="58.3" y="413.6" width="2" height=".8" fill="#000"/>
</svg>
<div class="t" style="font:8px 'Liberation Serif';line-height:10px;height:10px;top:23.5px;letter-spacing:0.137px;left:61.0px;color:#7a7a7a">SiDiary: Name des Patienten: Demo-org, Test / Zeitraum 07.07.2011 - 14.07.2011</div>
<div class="t" style="font:bold 8px 'Liberation Sans';line-height:10px;height:10px;top:46.8px;letter-spacing:0.142px;left:177.8px;text-decoration:underline">Alle Werte</div>
<div class="t" style="font:5px 'Liberation Sans';line-height:6px;height:6px;top:63.9px;letter-spacing:-0.122px;left:123.4px;-webkit-text-stroke:0;">Anzahl Messungen (Bz): 42, Niedrigster Wert: 40, Höchster: 273,</div>
<div class="t" style="font:5px 'Liberation Sans';line-height:6px;height:6px;top:70.3px;letter-spacing:-0.124px;left:123.4px;-webkit-text-stroke:0;">Mittelwert: 118, HbA1c: 6,1% (43,2mmol/mol), Stab: 60,1</div>
<div class="t" style="font:5px 'Liberation Sans';line-height:6px;height:6px;top:181.2px;letter-spacing:-0.128px;left:123.4px;-webkit-text-stroke:0;">Der HbA1c ist nur ein Näherungswert!</div>
<div class="t" style="font:bold 4.5px 'Liberation Sans';line-height:6px;height:6px;top:106.0px;letter-spacing:-0.051px;left:239.2px;-webkit-text-stroke:0;">Blutzucker (mg/</div>
<div class="t" style="font:4.5px 'Liberation Sans';line-height:6px;height:6px;top:113.3px;left:243.0px;-webkit-text-stroke:0;">24%</div>
<div class="t" style="font:4.5px 'Liberation Sans';line-height:6px;height:6px;top:113.3px;left:255.8px;-webkit-text-stroke:0;">< 70</div>
<div class="t" style="font:4.5px 'Liberation Sans';line-height:6px;height:6px;top:120.6px;left:243.0px;-webkit-text-stroke:0;">40%</div>
<div class="t" style="font:4.5px 'Liberation Sans';line-height:6px;height:6px;top:120.6px;left:255.8px;-webkit-text-stroke:0;">70 -</div>
<div class="t" style="font:4.5px 'Liberation Sans';line-height:6px;height:6px;top:126.6px;left:255.8px;-webkit-text-stroke:0;">130</div>
<div class="t" style="font:4.5px 'Liberation Sans';line-height:6px;height:6px;top:134.9px;left:243.0px;-webkit-text-stroke:0;">21%</div>
<div class="t" style="font:4.5px 'Liberation Sans';line-height:6px;height:6px;top:134.9px;left:255.8px;-webkit-text-stroke:0;">131 -</div>
<div class="t" style="font:4.5px 'Liberation Sans';line-height:6px;height:6px;top:141.1px;left:255.8px;-webkit-text-stroke:0;">200</div>
<div class="t" style="font:4.5px 'Liberation Sans';line-height:6px;height:6px;top:149.1px;left:243.0px;-webkit-text-stroke:0;">12%</div>
<div class="t" style="font:4.5px 'Liberation Sans';line-height:6px;height:6px;top:149.1px;left:255.8px;-webkit-text-stroke:0;">> 200</div>
<div class="t" style="font:bold 8px 'Liberation Sans';line-height:10px;height:10px;top:210.3px;letter-spacing:-0.137px;left:172.0px;text-decoration:underline">Verlaufsgrafik</div>
<div class="t" style="font:5.5px 'Liberation Sans';line-height:7px;height:7px;top:228.7px;letter-spacing:-0.023px;left:64.3px;-webkit-text-stroke:0;">Anzahl Messungen (Bz): 42, Niedrigster Wert: 40, Höchster: 273, Mittelwert: 118, HbA1c: 6,1%</div>
<div class="t" style="font:5.5px 'Liberation Sans';line-height:7px;height:7px;top:235.7px;letter-spacing:-0.140px;left:64.3px;-webkit-text-stroke:0;">(43,2mmol/mol), Stab: 60,1</div>
<div class="t" style="font:5.5px 'Liberation Sans';line-height:7px;height:7px;top:343.9px;letter-spacing:0.010px;left:48.3px;-webkit-text-stroke:0;">Der HbA1c ist nur ein Näherungswert!</div>
<div class="t" style="font:bold 8px 'Liberation Sans';line-height:10px;height:10px;top:374.3px;letter-spacing:-0.084px;left:166.0px;text-decoration:underline">Verteilungsgrafik</div>
<div class="t" style="font:5px 'Liberation Sans';line-height:6px;height:6px;top:509.0px;letter-spacing:-0.153px;left:48.9px;-webkit-text-stroke:0;">Der HbA1c ist nur ein Näherungswert!</div>
<div class="t" style="font:8px 'Liberation Serif';line-height:10px;height:10px;top:530.0px;letter-spacing:-0.062px;left:148.5px;color:#b08a8a">2 / 4 Ausdruck vom 14.07.2011</div>
<div class="t" style="font:bold 4.5px 'Liberation Sans';line-height:6px;height:6px;top:228.6px;letter-spacing:-0.500px;left:49.0px;-webkit-text-stroke:0;">mg/dl</div>
<div class="t" style="font:bold 4.5px 'Liberation Sans';line-height:6px;height:6px;top:393.4px;letter-spacing:-0.500px;left:49.0px;-webkit-text-stroke:0;">mg/dl</div>
<div class="t" style="font:bold 4.5px 'Liberation Sans';line-height:6px;height:6px;top:312.0px;left:53.5px;-webkit-text-stroke:0;">50</div>
<div class="t" style="font:bold 4.5px 'Liberation Sans';line-height:6px;height:6px;top:475.1px;left:53.5px;-webkit-text-stroke:0;">50</div>
<div class="t" style="font:bold 4.5px 'Liberation Sans';line-height:6px;height:6px;top:295.8px;left:51.0px;-webkit-text-stroke:0;">100</div>
<div class="t" style="font:bold 4.5px 'Liberation Sans';line-height:6px;height:6px;top:459.3px;left:51.0px;-webkit-text-stroke:0;">100</div>
<div class="t" style="font:bold 4.5px 'Liberation Sans';line-height:6px;height:6px;top:279.7px;left:51.0px;-webkit-text-stroke:0;">150</div>
<div class="t" style="font:bold 4.5px 'Liberation Sans';line-height:6px;height:6px;top:443.6px;left:51.0px;-webkit-text-stroke:0;">150</div>
<div class="t" style="font:bold 4.5px 'Liberation Sans';line-height:6px;height:6px;top:263.6px;left:51.0px;-webkit-text-stroke:0;">200</div>
<div class="t" style="font:bold 4.5px 'Liberation Sans';line-height:6px;height:6px;top:427.8px;left:51.0px;-webkit-text-stroke:0;">200</div>
<div class="t" style="font:bold 4.5px 'Liberation Sans';line-height:6px;height:6px;top:247.5px;left:51.0px;-webkit-text-stroke:0;">250</div>
<div class="t" style="font:bold 4.5px 'Liberation Sans';line-height:6px;height:6px;top:412.0px;left:51.0px;-webkit-text-stroke:0;">250</div>
<div class="t" style="font:bold 4.5px 'Liberation Sans';line-height:6px;height:6px;top:334.0px;letter-spacing:0.081px;left:105.9px;-webkit-text-stroke:0;">08.07.</div>
<div class="t" style="font:bold 4.5px 'Liberation Sans';line-height:6px;height:6px;top:334.0px;letter-spacing:0.081px;left:140.8px;-webkit-text-stroke:0;">09.07.</div>
<div class="t" style="font:bold 4.5px 'Liberation Sans';line-height:6px;height:6px;top:334.0px;letter-spacing:0.081px;left:175.0px;-webkit-text-stroke:0;">10.07.</div>
<div class="t" style="font:bold 4.5px 'Liberation Sans';line-height:6px;height:6px;top:334.0px;letter-spacing:0.122px;left:210.0px;-webkit-text-stroke:0;">11.07.</div>
<div class="t" style="font:bold 4.5px 'Liberation Sans';line-height:6px;height:6px;top:334.0px;letter-spacing:0.081px;left:244.8px;-webkit-text-stroke:0;">12.07.</div>
<div class="t" style="font:bold 4.5px 'Liberation Sans';line-height:6px;height:6px;top:334.0px;letter-spacing:0.081px;left:279.1px;-webkit-text-stroke:0;">13.07.</div>
<div class="t" style="font:bold 4.5px 'Liberation Sans';line-height:6px;height:6px;top:334.0px;left:60.4px;-webkit-text-stroke:0;">07.07.2011</div>
<div class="t" style="font:bold 4.5px 'Liberation Sans';line-height:6px;height:6px;top:334.0px;left:315.7px;-webkit-text-stroke:0;">14.07.2011</div>
<div class="t" style="font:bold 4.5px 'Liberation Sans';line-height:6px;height:6px;top:496.4px;left:80.8px;-webkit-text-stroke:0;">02</div>
<div class="t" style="font:bold 4.5px 'Liberation Sans';line-height:6px;height:6px;top:496.4px;left:104.0px;-webkit-text-stroke:0;">04</div>
<div class="t" style="font:bold 4.5px 'Liberation Sans';line-height:6px;height:6px;top:496.4px;left:127.2px;-webkit-text-stroke:0;">06</div>
<div class="t" style="font:bold 4.5px 'Liberation Sans';line-height:6px;height:6px;top:496.4px;left:150.4px;-webkit-text-stroke:0;">08</div>
<div class="t" style="font:bold 4.5px 'Liberation Sans';line-height:6px;height:6px;top:496.4px;left:173.6px;-webkit-text-stroke:0;">10</div>
<div class="t" style="font:bold 4.5px 'Liberation Sans';line-height:6px;height:6px;top:496.4px;left:196.8px;-webkit-text-stroke:0;">12</div>
<div class="t" style="font:bold 4.5px 'Liberation Sans';line-height:6px;height:6px;top:496.4px;left:220.0px;-webkit-text-stroke:0;">14</div>
<div class="t" style="font:bold 4.5px 'Liberation Sans';line-height:6px;height:6px;top:496.4px;left:243.2px;-webkit-text-stroke:0;">16</div>
<div class="t" style="font:bold 4.5px 'Liberation Sans';line-height:6px;height:6px;top:496.4px;left:266.4px;-webkit-text-stroke:0;">18</div>
<div class="t" style="font:bold 4.5px 'Liberation Sans';line-height:6px;height:6px;top:496.4px;left:289.6px;-webkit-text-stroke:0;">20</div>
<div class="t" style="font:bold 4.5px 'Liberation Sans';line-height:6px;height:6px;top:496.4px;left:312.8px;-webkit-text-stroke:0;">22</div>
<!--/P2--></div>
<div id="sb">
<div class="a" style="left:0;top:0;width:17px;height:36px;background:#6c6c6c"></div>
<div class="a" style="left:4px;top:6px;width:9px;height:2px;background:#2f2f2f"></div>
<svg class="a" style="left:3px;top:12px" width="12" height="12" viewBox="0 0 12 12"><rect x="0.500" y="2.500" width="11" height="7" fill="#e6e2ee" stroke="#8a8a9a" stroke-width=".6"/><path d="M2 1L5 5M4 8L7 11M6 3L9 7" stroke="#666" stroke-width="1"/><circle cx="6.500" cy="7.500" r="1.500" fill="#fff" stroke="#555" stroke-width=".6"/></svg>
<div class="a" style="left:0;top:28px;width:17px;height:1px;background:#7d7d7d"></div>
<svg class="a" style="left:4px;top:33px" width="10" height="6"><path d="M0 6L5 0L10 6Z" fill="#262626"/></svg>
<div class="a" style="left:1px;top:44px;width:15px;height:277px;border:1px solid #262626;border-radius:2px;background:linear-gradient(to right,#7f7f7f 0,#6f6f6f 35%,#616161 100%)"></div>
<div class="a" style="left:5px;top:179px;width:7px;height:1px;background:#9a9a9a;box-shadow:0 2px 0 #9a9a9a,0 4px 0 #9a9a9a,0 6px 0 #9a9a9a"></div>
<svg class="a" style="left:4px;top:488px" width="10" height="6"><path d="M0 0L10 0L5 6Z" fill="#262626"/></svg>
<div class="a" style="left:0;top:499px;width:18px;height:53px;background:#5f5f5f;border-top:1px solid #4a4a4a"></div>
<svg class="a" style="left:6px;top:504px" width="6" height="7" viewBox="0 0 8 9"><path d="M0 4L4 0L8 4ZM0 8.500L4 4.500L8 8.500Z" fill="#1e1e1e"/></svg>
<div class="a" style="left:5px;top:521px;width:8px;height:8px;border-radius:50%;background:#9a9a9a;border:1px solid #cfcfcf"></div>
<svg class="a" style="left:6px;top:538px" width="6" height="7" viewBox="0 0 8 9"><path d="M0 0.500L8 0.500L4 4.500ZM0 5L8 5L4 9Z" fill="#1e1e1e"/></svg>
</div>
</div>
<!-- STATUS BAR : inner coords = page coords - (8,690) -->
<div id="status">
<div class="t" style="left:8px;top:3px;letter-spacing:-.42px">Seite: 1 von 3</div>
<div class="ssep" style="left:86px"></div>
<div class="t" style="left:95px;top:3px;letter-spacing:-.25px">Wörter: 103</div>
<div class="ssep" style="left:165px"></div>
<div class="t" style="left:174px;top:3px;letter-spacing:-.27px">Englisch (Großbritannien)</div>
<div class="ssep" style="left:315px"></div>
<div class="ssep" style="left:654px"></div>
<!-- view buttons -->
<div class="ybtn" style="left:659px;top:1px;width:19px;height:19px;border-radius:2px"></div>
<svg class="a" style="left:662px;top:4px" width="13" height="13" viewBox="0 0 13 13"><rect x="0.500" y="0.500" width="12" height="12" fill="#fff" stroke="#3a3a3a"/><path d="M2 3.500h9M2 5.500h9M2 7.500h9M2 9.500h9" stroke="#555" stroke-width="1"/></svg>
<svg class="a" style="left:682px;top:4px" width="12" height="13" viewBox="0 0 12 13"><path d="M0.500 1L5.500 2V12L0.500 11ZM11.500 1L6.500 2V12L11.500 11Z" fill="#f2f2f2" stroke="#cfcfcf" stroke-width=".5"/><path d="M1.500 3.500h3M1.500 5.500h3M1.500 7.500h3M1.500 9.500h3M7.500 3.500h3M7.500 5.500h3M7.500 7.500h3M7.500 9.500h3" stroke="#3a3a3a" stroke-width="1"/></svg>
<svg class="a" style="left:699px;top:3px" width="14" height="14" viewBox="0 0 14 14"><rect x="0.500" y="0.500" width="9" height="10" fill="#f4f4f4" stroke="#cfcfcf" stroke-width=".5"/><path d="M1.500 2.500h7M1.500 4.500h7M1.500 6.500h4M1.500 8.500h3" stroke="#3a3a3a" stroke-width="1"/><circle cx="9.500" cy="10" r="3.300" fill="#2f74cc" stroke="#1a4a8c" stroke-width=".5"/><path d="M7.500 9Q9 7.500 10.500 8.500Q11.500 10 10 11.500Q8 11 7.500 9Z" fill="#5cb85c"/></svg>
<svg class="a" style="left:718px;top:4px" width="12" height="12" viewBox="0 0 12 12"><path d="M1 2.500h5M3 5h8M5 7.500h6M3 10h8" stroke="#8d8d8d" stroke-width="1"/><path d="M0.500 4.500h1.500M2.500 7h1.500" stroke="#b0b0b0" stroke-width="1"/></svg>
<svg class="a" style="left:736px;top:4px" width="13" height="12" viewBox="0 0 13 12"><path d="M0.500 1.500h12M0.500 4.500h12M0.500 7.500h12M0.500 10.500h12" stroke="#9a9a9a" stroke-width="1.100"/></svg>
<div class="t" style="left:761px;top:3px;letter-spacing:-.8px;font-size:12.300px">50 %</div>
<!-- zoom slider -->
<div class="a" style="left:809px;top:9px;width:102px;height:1px;background:#1f1f1f;box-shadow:0 1px 0 #5c5c5c"></div>
<div class="a" style="left:859px;top:5px;width:1px;height:10px;background:#1f1f1f;box-shadow:1px 0 0 #5c5c5c"></div>
<div class="a" style="left:794px;top:2px;width:15px;height:15px;border-radius:50%;background:radial-gradient(circle at 50% 30%,#e4e4e4 0,#b9b9b9 60%,#8f8f8f 100%);border:1px solid #555"></div>
<div class="a" style="left:797px;top:8px;width:9px;height:3px;background:#3c3c3c;border-radius:1px"></div>
<div class="a" style="left:909px;top:2px;width:15px;height:15px;border-radius:50%;background:radial-gradient(circle at 50% 30%,#e4e4e4 0,#b9b9b9 60%,#8f8f8f 100%);border:1px solid #555"></div>
<div class="a" style="left:912px;top:8px;width:9px;height:3px;background:#3c3c3c;border-radius:1px"></div>
<div class="a" style="left:915px;top:5px;width:3px;height:9px;background:#3c3c3c;border-radius:1px"></div>
<svg class="a" style="left:829px;top:2px" width="10" height="15" viewBox="0 0 10 15"><path d="M0.500 0.500H9.500V10L5 14.500L0.500 10Z" fill="#bdbdbd" stroke="#4a4a4a"/><path d="M1.500 1.500H8.500V9.500L5 13Z" fill="none" stroke="#e9e9e9" stroke-width=".8"/></svg>
<!-- grip -->
<svg class="a" style="left:931px;top:9px" width="11" height="11" viewBox="0 0 11 11"><g fill="#1c1c1c"><rect x="8" y="0" width="2" height="2"/><rect x="4" y="4" width="2" height="2"/><rect x="8" y="4" width="2" height="2"/><rect x="0" y="8" width="2" height="2"/><rect x="4" y="8" width="2" height="2"/><rect x="8" y="8" width="2" height="2"/></g><g fill="#6a6a6a"><rect x="9" y="1" width="1" height="1"/><rect x="5" y="5" width="1" height="1"/><rect x="9" y="5" width="1" height="1"/><rect x="1" y="9" width="1" height="1"/><rect x="5" y="9" width="1" height="1"/><rect x="9" y="9" width="1" height="1"/></g></svg>
</div>


<!-- RIBBON -->
<div id="ribbon">
<!-- coordinates inside ribbon are page coords minus (8,51) : use inner wrapper -->
<div class="a" id="rb" style="left:-8px;top:-52px;width:960px;height:140px">

<!-- Zwischenablage -->
<svg class="a" style="left:37px;top:56px" width="28" height="32" viewBox="0 0 28 32">
 <defs><linearGradient id="cb" x1="0" y1="0" x2="1" y2="1"><stop offset="0" stop-color="#f7cd80"/><stop offset="1" stop-color="#e9a94c"/></linearGradient></defs>
 <rect x="1.5" y="4.5" width="20" height="23" rx="1.5" fill="url(#cb)" stroke="#c99744"/>
 <path d="M7 6 L7 3.5 L9.5 3.5 Q11.5 0 13.5 3.5 L16 3.5 L16 6 Z" fill="#e8e8e8" stroke="#8a8a8a" stroke-width=".8"/>
 <path d="M9.5 12.500 L20.5 12.500 L26.5 18 L26.5 30.500 L9.500 30.500 Z" fill="#fdfdff" stroke="#9aa3b3"/>
 <path d="M20.500 12.500 L20.500 18 L26.500 18" fill="#e4e8f0" stroke="#9aa3b3" stroke-width=".8"/>
 <g stroke="#b9bfd0" stroke-width="1"><path d="M12 16.5h7M12 19.500h11M12 22.500h11M12 25.500h11M12 28h8"/></g>
</svg>
<div class="t" style="left:27px;top:92px;letter-spacing:-.1px">Einfügen</div>
<div class="dd" style="left:47px;top:110px"></div>
<!-- scissors -->
<svg class="a" style="left:81px;top:57px" width="13" height="16" viewBox="0 0 13 16">
 <path d="M2.500 0.500 L7.500 9.500 M10.500 0.500 L5.500 9.500" stroke="#7d7d7d" stroke-width="1.700" fill="none"/>
 <ellipse cx="3.500" cy="12" rx="2" ry="2.600" fill="none" stroke="#6e6e6e" stroke-width="1.500"/>
 <ellipse cx="9.500" cy="12" rx="2" ry="2.600" fill="none" stroke="#6e6e6e" stroke-width="1.500"/>
</svg>
<!-- copy -->
<svg class="a" style="left:79px;top:80px" width="17" height="14" viewBox="0 0 17 14">
 <path d="M1.500 0.500h6l2 2v7.500h-8z" fill="#e9e9e9" stroke="#8c8c8c"/>
 <path d="M3 3.500h4M3 5.500h5M3 7.500h5" stroke="#9a9a9a"/>
 <path d="M7.500 3.500h6l2 2v7.500h-8z" fill="#efefef" stroke="#8c8c8c"/>
 <path d="M9 6.500h4M9 8.500h5M9 10.500h5" stroke="#9a9a9a"/>
</svg>
<!-- format painter -->
<svg class="a" style="left:79px;top:101px" width="18" height="16" viewBox="0 0 18 16">
 <path d="M15.500 0.800 L17.200 2.500 L12.500 7 L10.500 5 Z" fill="#4b4aa8" stroke="#35347a" stroke-width=".6"/>
 <path d="M10.500 5 L12.500 7 L11 8.500 L9 6.500 Z" fill="#b8b8c8" stroke="#777" stroke-width=".5"/>
 <path d="M9 6 L11.500 8.500 L9.500 14 Q7 15 4.500 13 Q2 11.500 1 8.500 Z" fill="#f3d878" stroke="#b89a3c" stroke-width=".7"/>
 <path d="M3 9.500 L8.500 13.500" stroke="#d1b24f" stroke-width=".8"/>
</svg>
<div class="t" style="left:11px;top:122px;letter-spacing:-.34px">Zwischenablage</div>
<svg class="dl" style="left:104px;top:126px" viewBox="0 0 7 7"><path d="M0.500 5V0.500H5" fill="none" stroke="#8a8a8a"/><path d="M3 3L6 6M6.500 3.500V6.500H3.500" fill="none" stroke="#6f6f6f"/></svg>
<div class="gsep" style="left:116px;top:55px"></div>


<!-- Schriftart -->
<div class="combo" style="left:122px;top:62px;width:85px"></div>
<div class="t" style="left:125px;top:66px;letter-spacing:.1px">Arial</div>
<div class="dd" style="left:197px;top:71px"></div>
<div class="combo" style="left:207px;top:62px;width:61px"></div>
<div class="t" style="left:210px;top:66px">12</div>
<div class="dd" style="left:258px;top:71px"></div>
<!-- grow / shrink -->
<div class="t" style="left:272px;top:62px;font:bold 17px/20px 'Liberation Serif',serif;height:20px">A</div>
<svg class="a" style="left:282px;top:65px" width="6" height="4"><path d="M0 4L3 0L6 4Z" fill="#2a55c8"/></svg>
<div class="t" style="left:295px;top:65px;font:bold 12px/16px 'Liberation Serif',serif;height:16px">A</div>
<svg class="a" style="left:302px;top:67px" width="6" height="4"><path d="M0 0L6 0L3 4Z" fill="#2a55c8"/></svg>
<div class="isep" style="left:317px;top:63px;height:20px"></div>
<div class="t" style="left:326px;top:63px;font:bold 14px/18px 'Liberation Serif',serif;height:18px;letter-spacing:-.5px">Aa</div>
<div class="dd" style="left:344px;top:71px"></div>
<div class="isep" style="left:358px;top:63px;height:20px"></div>
<!-- clear formatting -->
<svg class="a" style="left:366px;top:64px" width="19" height="18" viewBox="0 0 19 18">
 <rect x="1.500" y="1.500" width="11" height="7" fill="#fff" stroke="#9aa8c0"/>
 <text x="2.500" y="8" font-family="Liberation Sans" font-size="6.500" font-weight="bold" fill="#222">Aa</text>
 <g transform="rotate(-35 12 12)"><rect x="6" y="9.500" width="12" height="5.500" rx="2.500" fill="#f4f7fc" stroke="#7f94b8"/><rect x="6" y="9.500" width="4" height="5.500" rx="2" fill="#c9d6ec" stroke="#7f94b8"/></g>
</svg>
<!-- row 2 -->
<div class="ybtn" style="left:122px;top:91px;width:23px;height:22px"></div>
<div class="t" style="left:128px;top:94px;font:bold 14px/16px 'Liberation Serif',serif;height:16px">F</div>
<div class="t" style="left:152px;top:94px;font:italic bold 14px/16px 'Liberation Serif',serif;height:16px">K</div>
<div class="ybtn" style="left:169px;top:91px;width:35px;height:22px"></div>
<div class="a" style="left:191px;top:92px;width:1px;height:20px;background:#e3b23c"></div>
<div class="t" style="left:175px;top:94px;font:bold 14px/16px 'Liberation Serif',serif;height:16px;text-decoration:underline">U</div>
<div class="dd" style="left:195px;top:100px;border-top-color:#7a6a3a"></div>
<div class="t" style="left:207px;top:95px;font:bold 12px/15px 'Liberation Serif',serif;height:15px;text-decoration:line-through;color:#555;letter-spacing:-.3px">abc</div>
<div class="t" style="left:233px;top:94px;font:bold 13px/16px 'Liberation Sans',sans-serif;height:16px;color:#1c1c1c;transform:scaleX(1.18);transform-origin:0 0">x</div>
<div class="t" style="left:242px;top:102px;font:bold 6.500px/7px 'Liberation Sans',sans-serif;height:7px;color:#2a55c8">2</div>
<div class="t" style="left:256px;top:94px;font:bold 13px/16px 'Liberation Sans',sans-serif;height:16px;color:#1c1c1c;transform:scaleX(1.18);transform-origin:0 0">x</div>
<div class="t" style="left:265px;top:94px;font:bold 6.500px/7px 'Liberation Sans',sans-serif;height:7px;color:#2a55c8">2</div>
<div class="isep" style="left:278px;top:92px;height:21px"></div>
<!-- text effects -->
<div class="t" style="left:288px;top:91px;font:17px/20px 'Liberation Sans',sans-serif;height:20px;color:#d2d2d2;-webkit-text-stroke:1px #a6a6a6;text-shadow:0 0 2px #bbb">A</div>
<div class="dd" style="left:306px;top:100px;border-top-color:#8a8a8a"></div>
<!-- highlight -->
<div class="a" style="left:318px;top:94px;width:10px;height:10px;background:#fff04a"></div>
<div class="t" style="left:318px;top:93px;font:10px/11px 'Liberation Sans',sans-serif;height:11px;letter-spacing:-.6px">ab</div>
<svg class="a" style="left:324px;top:94px" width="11" height="12" viewBox="0 0 11 12"><path d="M7.500 0.500L10.500 3L5 9.500L2 7Z" fill="#dfe8f5" stroke="#6f86ad" stroke-width=".8"/><path d="M2 7L5 9.500L1 11Z" fill="#e8c890" stroke="#9a7a40" stroke-width=".5"/></svg>
<div class="a" style="left:318px;top:106px;width:16px;height:4px;background:#fff000"></div>
<div class="dd" style="left:340px;top:100px"></div>
<!-- font colour -->
<div class="t" style="left:354px;top:90px;font:bold 17px/20px 'Liberation Serif',serif;height:20px;color:#2b4fa8">A</div>
<div class="a" style="left:352px;top:106px;width:16px;height:4px;background:#f00000"></div>
<div class="dd" style="left:373px;top:100px"></div>
<div class="t" style="left:222px;top:122px;letter-spacing:-.1px">Schriftart</div>
<svg class="dl" style="left:378px;top:126px" viewBox="0 0 7 7"><path d="M0.500 5V0.500H5" fill="none" stroke="#8a8a8a"/><path d="M3 3L6 6M6.500 3.500V6.500H3.500" fill="none" stroke="#6f6f6f"/></svg>
<div class="gsep" style="left:390px;top:55px"></div>


<!-- Absatz -->
<!-- bullets -->
<svg class="a" style="left:400px;top:58px" width="16" height="13" viewBox="0 0 16 13">
 <g fill="#3b62c4"><circle cx="1.700" cy="1.800" r="1.500"/><circle cx="1.700" cy="6.500" r="1.500"/><circle cx="1.700" cy="11.200" r="1.500"/></g>
 <g fill="#111"><rect x="5" y="1" width="10" height="1.500"/><rect x="5" y="5.800" width="10" height="1.500"/><rect x="5" y="10.500" width="10" height="1.500"/></g>
</svg>
<div class="dd" style="left:421px;top:63px"></div>
<!-- numbering -->
<svg class="a" style="left:434px;top:57px" width="16" height="15" viewBox="0 0 16 15">
 <g font-family="Liberation Sans" font-size="5.500" font-weight="bold" fill="#3b62c4"><text x="0" y="4.800">1</text><text x="0" y="9.600">2</text><text x="0" y="14.400">3</text></g>
 <g fill="#111"><rect x="5" y="2" width="10" height="1.500"/><rect x="5" y="6.800" width="10" height="1.500"/><rect x="5" y="11.500" width="10" height="1.500"/></g>
</svg>
<div class="dd" style="left:456px;top:63px"></div>
<!-- multilevel -->
<svg class="a" style="left:467px;top:57px" width="19" height="17" viewBox="0 0 19 17">
 <g font-family="Liberation Sans" font-size="5.500" font-weight="bold" fill="#3b62c4"><text x="0" y="5">1</text><text x="4" y="10.500">a</text><text x="8.500" y="16">i</text></g>
 <g fill="#111"><rect x="5" y="2.500" width="11" height="1.400"/><rect x="9" y="7.800" width="8" height="1.400"/><rect x="12" y="13" width="5" height="1.400"/></g>
</svg>
<div class="dd" style="left:486px;top:63px"></div>
<div class="isep" style="left:499px;top:55px;height:21px"></div>
<!-- decrease indent -->
<svg class="a" style="left:508px;top:57px" width="17" height="15" viewBox="0 0 17 15">
 <g fill="#111"><rect x="5" y="1" width="11" height="1.500"/><rect x="8" y="4" width="8" height="1.500"/><rect x="8" y="7" width="8" height="1.500"/><rect x="5" y="10" width="11" height="1.500"/><rect x="5" y="13" width="11" height="1.500"/></g>
 <path d="M7 6.500H2.500M4.500 4L2 6.500L4.500 9" fill="none" stroke="#3b62c4" stroke-width="1.500"/>
 <path d="M7.500 0V15" stroke="#111" stroke-width=".6" stroke-dasharray="1 1"/>
</svg>
<!-- increase indent -->
<svg class="a" style="left:530px;top:57px" width="17" height="15" viewBox="0 0 17 15">
 <g fill="#111"><rect x="5" y="1" width="11" height="1.500"/><rect x="8" y="4" width="8" height="1.500"/><rect x="8" y="7" width="8" height="1.500"/><rect x="5" y="10" width="11" height="1.500"/><rect x="5" y="13" width="11" height="1.500"/></g>
 <path d="M0.500 6.500H5.500M3.500 4L6 6.500L3.500 9" fill="none" stroke="#3b62c4" stroke-width="1.500"/>
 <path d="M7.500 0V15" stroke="#111" stroke-width=".6" stroke-dasharray="1 1"/>
</svg>
<!-- row 2 : alignment -->
<svg class="a" style="left:400px;top:80px" width="16" height="13" viewBox="0 0 16 13"><g fill="#111"><rect x="0" y="0.500" width="15" height="1.500"/><rect x="0" y="3.500" width="11" height="1.500"/><rect x="0" y="6.500" width="15" height="1.500"/><rect x="0" y="9.500" width="11" height="1.500"/></g></svg>
<div class="ybtn" style="left:419px;top:76px;width:24px;height:22px"></div>
<svg class="a" style="left:424px;top:80px" width="15" height="13" viewBox="0 0 15 13"><g fill="#111"><rect x="0" y="0.500" width="14" height="1.500"/><rect x="2" y="3.500" width="10" height="1.500"/><rect x="0" y="6.500" width="14" height="1.500"/><rect x="2" y="9.500" width="10" height="1.500"/></g></svg>
<svg class="a" style="left:447px;top:80px" width="16" height="13" viewBox="0 0 16 13"><g fill="#111"><rect x="0" y="0.500" width="15" height="1.500"/><rect x="4" y="3.500" width="11" height="1.500"/><rect x="0" y="6.500" width="15" height="1.500"/><rect x="4" y="9.500" width="11" height="1.500"/></g></svg>
<svg class="a" style="left:471px;top:80px" width="16" height="13" viewBox="0 0 16 13"><g fill="#111"><rect x="0" y="0.500" width="15" height="1.500"/><rect x="0" y="3.500" width="15" height="1.500"/><rect x="0" y="6.500" width="15" height="1.500"/><rect x="0" y="9.500" width="15" height="1.500"/></g></svg>
<div class="isep" style="left:493px;top:77px;height:21px"></div>
<!-- line spacing -->
<svg class="a" style="left:502px;top:78px" width="17" height="17" viewBox="0 0 17 17">
 <path d="M3 1L3 7M0.800 3.500L3 1L5.200 3.500M3 10L3 16M0.800 13.500L3 16L5.200 13.500" fill="none" stroke="#3b62c4" stroke-width="1.400"/>
 <g fill="#111"><rect x="7" y="3" width="9" height="1.400"/><rect x="7" y="6" width="9" height="1.400"/><rect x="7" y="9" width="9" height="1.400"/><rect x="7" y="12" width="9" height="1.400"/></g>
</svg>
<div class="dd" style="left:520px;top:85px"></div>
<!-- row 3 -->
<svg class="a" style="left:399px;top:100px" width="18" height="18" viewBox="0 0 18 18">
 <path d="M2.500 7.500L8 2L14 8L8.500 13.500Z" fill="#f6f8fb" stroke="#7d8590" stroke-width=".9"/>
 <path d="M4 7.500L8 3.500L12.500 8Z" fill="#c9d4e4"/>
 <path d="M6.500 1.500Q7.500 -0.500 8.500 1.500L8.500 6" fill="none" stroke="#6b6b6b" stroke-width=".9"/>
 <path d="M14 8Q16 10 15 12.500Q13 11.500 13 9Z" fill="#3f78d0"/>
 <rect x="1" y="14.500" width="15" height="3" fill="#f2f2f2" stroke="#b5b5b5" stroke-width=".5"/>
</svg>
<div class="dd" style="left:421px;top:108px"></div>
<svg class="a" style="left:434px;top:102px" width="15" height="15" viewBox="0 0 15 15">
 <path d="M1.500 1.500H13.500V12M1.500 1.500V12M7.500 1.500V12M1.500 7H13.500" fill="none" stroke="#8f8f8f" stroke-width="1" stroke-dasharray="1 1"/>
 <rect x="1" y="13" width="13" height="1.500" fill="#111"/>
</svg>
<div class="dd" style="left:454px;top:108px"></div>
<div class="isep" style="left:467px;top:99px;height:21px"></div>
<div class="t" style="left:476px;top:99px;font:bold 10px/10px 'Liberation Serif',serif;height:10px;color:#2f58b8">A</div>
<div class="t" style="left:476px;top:108px;font:bold 10px/10px 'Liberation Serif',serif;height:10px;color:#b03030">Z</div>
<svg class="a" style="left:485px;top:100px" width="8" height="17" viewBox="0 0 8 17"><path d="M4 0.500V15M1.300 12L4 15.500L6.700 12" fill="none" stroke="#111" stroke-width="1.300"/></svg>
<div class="isep" style="left:500px;top:99px;height:21px"></div>
<div class="t" style="left:511px;top:100px;font:bold 16px/18px 'Liberation Sans',sans-serif;height:18px;color:#222">¶</div>
<div class="t" style="left:445px;top:122px;letter-spacing:-.4px">Absatz</div>
<svg class="dl" style="left:540px;top:126px" viewBox="0 0 7 7"><path d="M0.500 5V0.500H5" fill="none" stroke="#8a8a8a"/><path d="M3 3L6 6M6.500 3.500V6.500H3.500" fill="none" stroke="#6f6f6f"/></svg>
<div class="gsep" style="left:552px;top:55px"></div>


<!-- Formatvorlagen -->
<div class="a" style="left:559px;top:57px;width:232px;height:59px;background:#c3c3c3;border:1px solid #a8a8a8;border-radius:2px"></div>
<div class="a" style="left:561px;top:59px;width:70px;height:55px;background:#fff;border:2px solid #f2c64e;border-radius:2px;box-shadow:0 0 0 1px #e0a92e"></div>
<div class="a" style="left:636px;top:63px;width:64px;height:48px;background:#fff"></div>
<div class="a" style="left:708px;top:63px;width:64px;height:48px;background:#fff"></div>
<div class="t" style="left:567px;top:70px;font:15px/18px 'Liberation Serif',serif;height:18px;letter-spacing:.05px">AaBbCcI</div>
<div class="t" style="left:639px;top:70px;font:15px/18px 'Liberation Serif',serif;height:18px;letter-spacing:.05px">AaBbCcI</div>
<div class="a" style="left:710px;top:66px;width:62px;height:24px;overflow:hidden"><div class="t" style="left:2px;top:3px;font:italic bold 16.500px/20px 'Liberation Serif',serif;height:20px;letter-spacing:.9px">AaBbCc</div></div>
<div class="t" style="left:567px;top:95px;letter-spacing:-.3px;font-size:11.500px"><span style="font-weight:bold;font-size:10px">¶</span> Standard</div>
<div class="t" style="left:638px;top:95px;letter-spacing:-.3px;font-size:11.500px"><span style="font-weight:bold;font-size:10px">¶</span> Kein Lee...</div>
<div class="t" style="left:710px;top:95px;letter-spacing:-.25px;font-size:11.500px">Überschrif...</div>
<!-- gallery scroll buttons -->
<div class="a" style="left:779px;top:58px;width:12px;height:19px;background:#bdbdbd;border:1px solid #adadad;border-radius:2px 2px 0 0"></div>
<div class="a" style="left:779px;top:77px;width:12px;height:19px;background:linear-gradient(#dcdcdc,#c9c9c9);border:1px solid #a0a0a0"></div>
<div class="a" style="left:779px;top:96px;width:12px;height:20px;background:linear-gradient(#dcdcdc,#c9c9c9);border:1px solid #a0a0a0;border-radius:0 0 2px 2px"></div>
<svg class="a" style="left:782px;top:65px" width="6" height="4"><path d="M0 4L3 0L6 4Z" fill="#a4a4a4"/></svg>
<svg class="a" style="left:782px;top:85px" width="6" height="4"><path d="M0 0L6 0L3 4Z" fill="#5a5a5a"/></svg>
<svg class="a" style="left:782px;top:102px" width="6" height="8"><path d="M0 0.500H6" stroke="#5a5a5a"/><path d="M0 3L6 3L3 7Z" fill="#5a5a5a"/></svg>
<!-- change styles -->
<div class="t" style="left:822.500px;top:54.800px;font:bold 25.500px/28px 'Liberation Sans',sans-serif;height:28px;color:#b443c2;transform:skewX(-4deg) scaleX(.74);transform-origin:0 100%">A</div>
<div class="t" style="left:828.500px;top:53.600px;font:37px/39px 'Liberation Serif',serif;height:39px;color:#4482d6;transform:scaleX(.9);transform-origin:0 0;text-shadow:0 0 1px #2a5aa8">A</div>
<div class="t" style="left:797px;top:92px;letter-spacing:-.3px">Formatvorlagen</div>
<div class="t" style="left:815px;top:105px;letter-spacing:-.1px">ändern</div>
<div class="dd" style="left:855px;top:110px"></div>
<div class="t" style="left:669px;top:122px;letter-spacing:-.22px">Formatvorlagen</div>
<svg class="dl" style="left:872px;top:127px" viewBox="0 0 7 7"><path d="M0.500 5V0.500H5" fill="none" stroke="#8a8a8a"/><path d="M3 3L6 6M6.500 3.500V6.500H3.500" fill="none" stroke="#6f6f6f"/></svg>
<div class="gsep" style="left:884px;top:55px"></div>


<!-- Bearbeiten -->
<div class="a" style="left:901px;top:55px;width:31px;height:31px;border:1px solid #a5a5a5;border-radius:4px;background:linear-gradient(#d6d6d6,#cdcdcd)"></div>
<svg class="a" style="left:908px;top:62px" width="18" height="16" viewBox="0 0 18 16">
 <g fill="#4d78c8" stroke="#2f4f96" stroke-width=".6">
 <path d="M2.500 6L3.500 2.500Q5 1 6.500 2.500L7.500 6L7.500 14.500H1.500V8Z"/>
 <path d="M10.500 6L11.500 2.500Q13 1 14.500 2.500L15.500 6L16.500 8V14.500H10.500Z"/>
 </g>
 <rect x="7.500" y="7" width="3" height="3" fill="#3a5fa8"/>
 <rect x="2.500" y="9" width="4" height="5" fill="#e8eefc"/><rect x="11.500" y="9" width="4" height="5" fill="#e8eefc"/>
 <rect x="3.800" y="1" width="2.400" height="2.500" fill="#e8eefc" stroke="#2f4f96" stroke-width=".4"/><rect x="11.800" y="1" width="2.400" height="2.500" fill="#e8eefc" stroke="#2f4f96" stroke-width=".4"/>
</svg>
<div class="t" style="left:889px;top:90px;letter-spacing:-.3px">Bearbeiten</div>
<div class="dd" style="left:914px;top:108px"></div>
<div class="gsep" style="left:947px;top:55px"></div>

</div>
</div>

</div>
</body></html>
